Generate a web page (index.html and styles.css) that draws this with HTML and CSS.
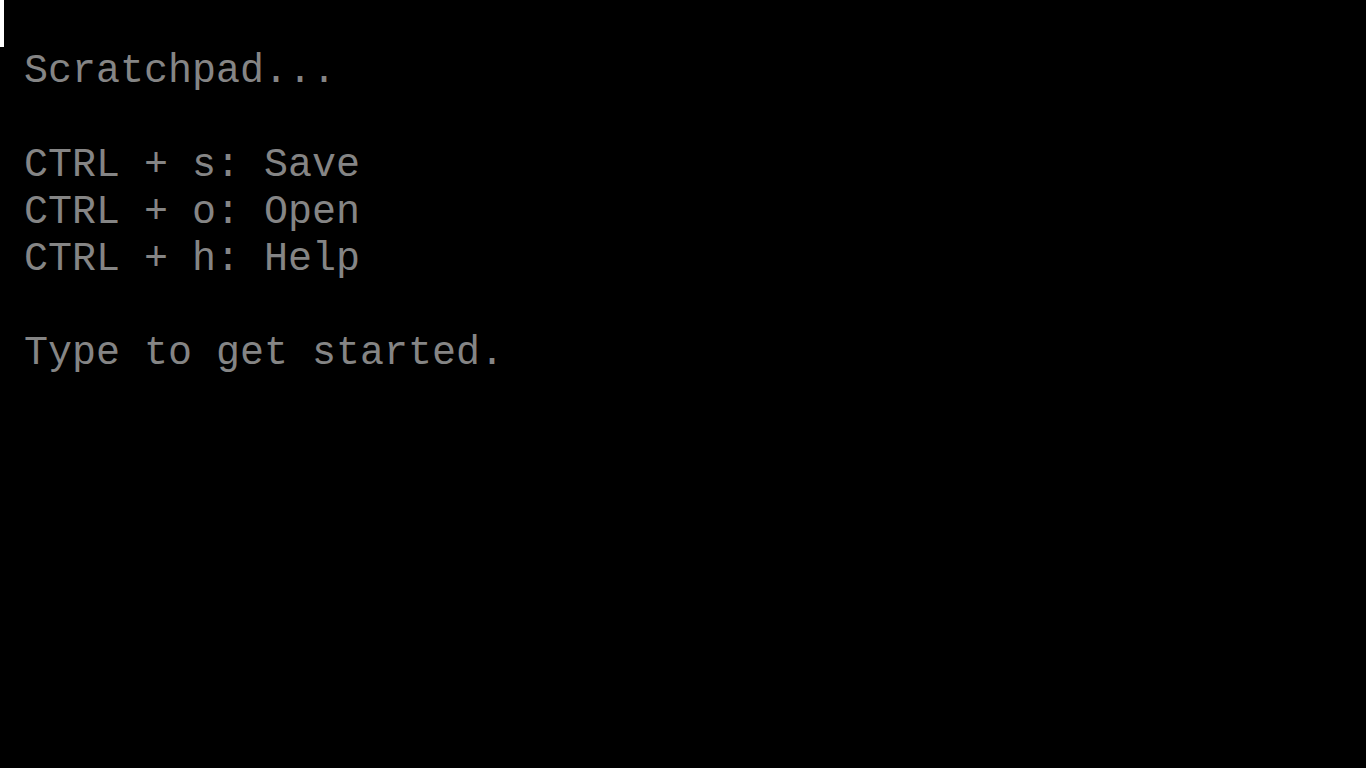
FILE: index.html
```html
<!DOCTYPE html>
<html>
<head>
<meta charset="utf-8">
<link rel="stylesheet" href="styles.css">
</head>
<body>
<div class="pad">
<div class="caret"></div>
<div class="hint">
<div class="line">Scratchpad...</div>
<div class="line">&nbsp;</div>
<div class="line">CTRL + s: Save</div>
<div class="line">CTRL + o: Open</div>
<div class="line">CTRL + h: Help</div>
<div class="line">&nbsp;</div>
<div class="line">Type to get started.</div>
</div>
</div>
</body>
</html>
```
FILE: styles.css
```css
html, body {
  margin: 0;
  padding: 0;
  background: #000;
  height: 100%;
}
.pad {
  display: flex;
  flex-direction: column;
}
.caret {
  width: 4px;
  height: 47px;
  background: #fff;
}
.hint {
  padding-top: 1px;
  padding-left: 24px;
  font-family: "Courier New", "Nimbus Mono PS", "Nimbus Mono L", "FreeMono", Courier, "Liberation Mono", monospace;
  font-size: 40px;
  line-height: 47px;
  color: #858585;
}
.line {
  white-space: pre;
}
```
